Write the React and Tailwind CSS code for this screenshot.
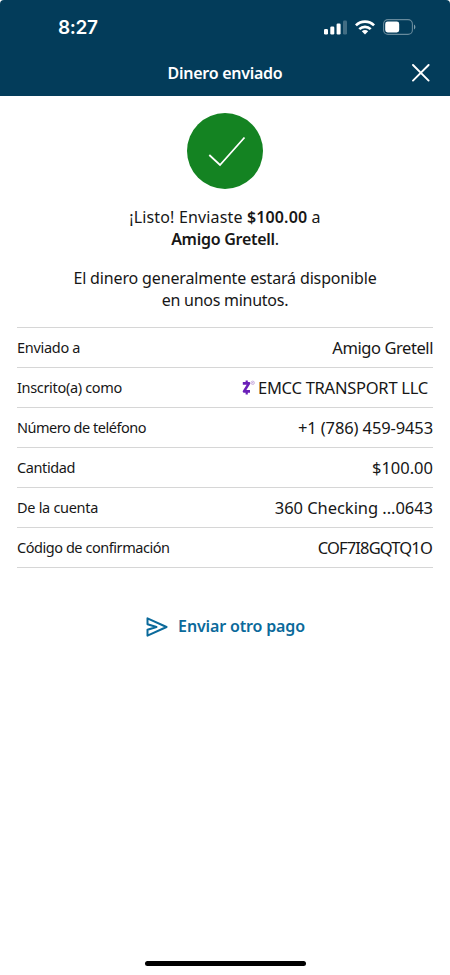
import clsx from "clsx";

const details = [
	{ label: "Enviado a", value: "Amigo Gretell", labelClass: "tracking-[-0.3px]", valueClass: "tracking-[-0.43px]" },
	{
		label: "Inscrito(a) como",
		value: "EMCC TRANSPORT LLC",
		labelClass: "tracking-[-0.33px]",
		valueClass: "tracking-[-0.25px] pr-[5px]",
		zelle: true,
	},
	{ label: "Número de teléfono", value: "+1 (786) 459-9453", labelClass: "tracking-[-0.48px]", valueClass: "tracking-[-0.12px]" },
	{ label: "Cantidad", value: "$100.00", labelClass: "tracking-[-0.4px]", valueClass: "tracking-[0px]" },
	{ label: "De la cuenta", value: "360 Checking ...0643", labelClass: "tracking-[-0.3px]", valueClass: "tracking-[-0.05px]" },
	{ label: "Código de confirmación", value: "COF7I8GQTQ1O", labelClass: "tracking-[-0.45px]", valueClass: "tracking-[-0.85px] pr-[1px]" },
];

function StatusBar() {
	return (
		<div className="flex h-[54px] items-center justify-between pl-[58px] pr-[34px]">
			<span className="font-['Inter',sans-serif] text-[19px] font-semibold leading-none tracking-[-0.35px]">8:27</span>
			<div className="flex items-center gap-[8px]">
				<svg width="23" height="15" viewBox="0 0 23 15" fill="currentColor">
					<rect x="0" y="9" width="4" height="5.5" rx="1.2" />
					<rect x="6.3" y="6.5" width="4" height="8" rx="1.2" />
					<rect x="12.6" y="3.5" width="4" height="11" rx="1.2" />
					<rect x="19" y="0.5" width="4" height="14" rx="1.2" opacity="0.25" />
				</svg>
				<svg width="20" height="15" viewBox="0 0 20 15" fill="none" stroke="currentColor" strokeWidth="2.7">
					<path d="M0.9 5.4C5.9 0.4 14.1 0.4 19.1 5.4" />
					<path d="M4.3 9.1C7.5 6 12.5 6 15.7 9.1" />
					<path d="M6.8 11.3C8.6 9.6 11.4 9.6 13.2 11.3L10 14.6Z" fill="currentColor" stroke="none" />
				</svg>
				<svg width="33" height="16" viewBox="0 0 33 16" fill="none">
					<rect x="0.6" y="0.6" width="28.8" height="14.8" rx="4.4" stroke="currentColor" strokeOpacity="0.4" strokeWidth="1.1" />
					<rect x="2.2" y="2.5" width="14" height="11" rx="2.4" fill="currentColor" />
					<path d="M31 5.5C32.8 6.3 32.8 9.7 31 10.5Z" fill="currentColor" fillOpacity="0.5" />
				</svg>
			</div>
		</div>
	);
}

function ZelleMark() {
	return (
		<svg width="14" height="15" viewBox="0 0 14 15" fill="none" className="mr-[2px]">
			<path d="M4.7 0.6V3M4.7 12V14.4" stroke="#6a1fb8" strokeWidth="2.2" />
			<path d="M0.8 3.4H7L2 11.4H8" stroke="#6a1fb8" strokeWidth="2.6" strokeLinejoin="round" />
			<circle cx="10.7" cy="2.8" r="1.7" stroke="#c5a9dd" strokeWidth="0.9" />
			<circle cx="10.7" cy="2.8" r="0.8" fill="#c5a9dd" />
		</svg>
	);
}

export default function App() {
	return (
		<div className="flex h-[975px] w-[450px] flex-col bg-white font-['Noto_Sans',sans-serif] text-[#171717]">
			<header className="h-[96px] rounded-t-[4px] bg-[#033c5a] text-white">
				<StatusBar />
				<div className="grid h-[38px] grid-cols-[40px_1fr_40px] items-center px-[10px]">
					<h1 className="col-start-2 text-center text-[16px] font-semibold leading-none tracking-[-0.27px]">Dinero enviado</h1>
					<button aria-label="Cerrar" className="flex justify-center pl-[1px]">
						<svg width="18" height="18" viewBox="0 0 18 18" stroke="currentColor" strokeWidth="1.9" strokeLinecap="round">
							<path d="M1 1L16.6 16.6M16.6 1L1 16.6" />
						</svg>
					</button>
				</div>
			</header>
			<main className="flex flex-1 flex-col items-center px-[17px] pt-[17px]">
				<svg width="76" height="76" viewBox="0 0 76 76" fill="none">
					<circle cx="38" cy="38" r="38" fill="#148322" />
					<path d="M22.3 42L33 52L57.5 24.5" stroke="white" strokeWidth="1.8" />
				</svg>
				<p className="mt-[17px] text-center text-[16px] leading-[22px] tracking-[-0.27px]">
					<span className="tracking-[0.15px]">
						¡Listo! Enviaste <b className="font-semibold">$100.00</b> a
					</span>
					<br />
					<b className="font-semibold">Amigo Gretell</b>.
				</p>
				<p className="mt-[17px] text-center text-[16px] leading-[22px] tracking-[-0.27px]">
					<span className="tracking-[-0.15px]">El dinero generalmente estará disponible</span>
					<br />
					en unos minutos.
				</p>
				<dl className="mt-[16px] w-full border-t border-[#d6d6d6]">
					{details.map((item) => (
						<div key={item.label} className="flex h-[40.05px] items-center justify-between border-b border-[#d6d6d6]">
							<dt className={clsx("pb-[2px] text-[14.5px] leading-[20px]", item.labelClass)}>{item.label}</dt>
							<dd className={clsx("flex items-center text-[16.5px] leading-[20px]", item.valueClass)}>
								{item.zelle && <ZelleMark />}
								{item.value}
							</dd>
						</div>
					))}
				</dl>
				<button className="mt-[46px] flex items-center gap-[10px] pl-[1px] text-[#0b6a9b]">
					<svg width="22" height="20" viewBox="0 0 22 20" fill="none" stroke="currentColor" strokeWidth="2" strokeLinejoin="round">
						<path d="M1.5 1.3L20.5 10L1.5 18.7V12.8L10.5 10L1.5 7.2Z" />
					</svg>
					<span className="pb-[1px] text-[16px] font-semibold leading-[24px] tracking-[-0.15px]">Enviar otro pago</span>
				</button>
			</main>
			<footer className="flex h-[14px] justify-center">
				<div className="h-[5px] w-[161px] rounded-full bg-black" />
			</footer>
		</div>
	);
}
